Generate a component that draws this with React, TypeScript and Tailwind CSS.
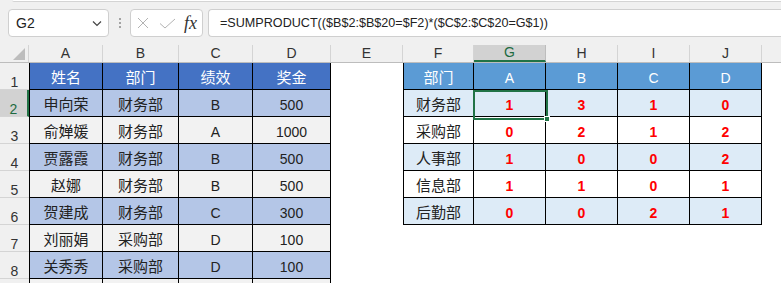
import React from "react";

const colW = ["w-[74px]", "w-[76px]", "w-[74px]", "w-[78px]", "w-[72px]", "w-[71px]", "w-[72px]", "w-[72px]", "w-[72px]", "w-[72px]"];
const letters = ["A", "B", "C", "D", "E", "F", "G", "H", "I", "J"];

const people = [
  ["姓名", "部门", "绩效", "奖金"],
  ["申向荣", "财务部", "B", "500"],
  ["俞婵媛", "财务部", "A", "1000"],
  ["贾露霞", "财务部", "B", "500"],
  ["赵娜", "财务部", "B", "500"],
  ["贺建成", "财务部", "C", "300"],
  ["刘丽娟", "采购部", "D", "100"],
  ["关秀秀", "采购部", "D", "100"],
  ["", "", "", ""],
];

const summary = [
  ["部门", "A", "B", "C", "D"],
  ["财务部", "1", "3", "1", "0"],
  ["采购部", "0", "2", "1", "2"],
  ["人事部", "1", "0", "0", "2"],
  ["信息部", "1", "1", "0", "1"],
  ["后勤部", "0", "0", "2", "1"],
];

const isHan = (s: string) => /[\u4e00-\u9fff]/.test(s);

function Cell({ w, text, cls }: { w: string; text: string; cls: string }) {
  return (
    <div className={`${w} h-full shrink-0 flex items-center justify-center pt-[4px] ${isHan(text) ? "text-[15px]" : "text-[14px]"} ${cls}`}>
      {text}
    </div>
  );
}

function FormulaBar() {
  return (
    <div className="h-[45px] bg-[#f0f0f0] relative">
      <div className="h-[2px] ml-3 bg-white border-b border-[#d4d4d4] rounded-bl-sm" />
      <div className="flex items-center mt-[7px] h-[28px]">
        {/* name box */}
        <div className="ml-[8px] w-[101px] h-full bg-white border border-[#cfcfcf] rounded-[4px] flex items-center justify-between pl-[7px] pr-[6px]">
          <span className="text-[14px] text-[#222]">G2</span>
          <svg width="10" height="7" viewBox="0 0 10 7"><path d="M1 1.5 L5 5.5 L9 1.5" fill="none" stroke="#444" strokeWidth="1.2" /></svg>
        </div>
        <svg className="ml-[9px]" width="4" height="12" viewBox="0 0 4 12">
          <circle cx="2" cy="2" r="1" fill="#8a8a8a" />
          <circle cx="2" cy="6" r="1" fill="#8a8a8a" />
          <circle cx="2" cy="10" r="1" fill="#8a8a8a" />
        </svg>
        {/* cancel / enter / fx */}
        <div className="ml-[8px] w-[73px] h-full bg-white border border-[#cfcfcf] rounded-[4px] flex items-center pl-[6px]">
          <svg width="12" height="12" viewBox="0 0 12 12"><path d="M1 1 L11 11 M11 1 L1 11" stroke="#b3b3b3" strokeWidth="1" fill="none" /></svg>
          <svg className="ml-[10px]" width="17" height="11" viewBox="0 0 17 11"><path d="M1 5.5 L6 10 L16 1" stroke="#b3b3b3" strokeWidth="1" fill="none" /></svg>
          <span className="ml-[8px] text-[18px] italic text-[#333] leading-none" style={{ fontFamily: '"Liberation Serif", serif' }}>fx</span>
        </div>
        <div className="ml-[5px] flex-1 h-full bg-white border border-r-0 border-[#cfcfcf] rounded-l-[4px] flex items-center pl-[11px]">
          <span className="text-[12.6px] text-[#222]">=SUMPRODUCT(($B$2:$B$20=$F2)*($C$2:$C$20=G$1))</span>
        </div>
      </div>
    </div>
  );
}

export default function App() {
  return (
    <div className="w-[781px] h-[283px] overflow-hidden bg-white" style={{ fontFamily: '"Liberation Sans", "Noto Sans CJK SC", sans-serif' }}>
      <FormulaBar />
      <div className="relative">
        {/* column letters */}
        <div className="flex h-[18px] bg-[#f0f0f0] border-b border-[#bdbdbd]">
          <div className="w-[29px] shrink-0 h-full border-r border-[#d4d4d4] flex items-end justify-end pr-[3px] pb-[2px]">
            <svg width="12" height="12" viewBox="0 0 12 12"><path d="M12 0 L12 12 L0 12 Z" fill="#bdbdbd" /></svg>
          </div>
          {letters.map((l, i) => (
            <div
              key={l}
              className={`${colW[i]} shrink-0 h-full flex items-center justify-center text-[14px] border-r ${
                l === "G" ? "bg-[#d2d2d2] text-[#1e6b41] border-[#bdbdbd] border-b-2 border-b-[#217346]" : "text-[#333] border-[#d4d4d4]"
              }`}
            >
              {l}
            </div>
          ))}
          <div className="flex-1" />
        </div>

        {people.map((p, ri) => {
          const r = ri + 1;
          const sel = r === 2;
          const s = summary[ri];
          return (
            <div key={r} className="flex h-[27px]">
              <div
                className={`w-[29px] shrink-0 h-full flex items-end justify-center leading-none text-[14px] border-b border-[#d4d4d4] ${
                  sel ? "bg-[#d2d2d2] text-[#1e6b41] border-r-2 border-r-[#217346]" : "bg-[#f0f0f0] text-[#333]"
                }`}
              >
                {r < 9 ? r : ""}
              </div>
              {p.map((t, ci) => (
                <Cell
                  key={ci}
                  w={colW[ci]}
                  text={t}
                  cls={`border-r border-b border-black ${ci === 0 ? "border-l" : ""} ${
                    r === 1 ? "bg-[#4472c4] text-white" : r % 2 === 0 ? "bg-[#b4c6e7] text-[#222]" : "bg-[#f2f2f2] text-[#222]"
                  }`}
                />
              ))}
              <div className={`${colW[4]} shrink-0 h-full bg-white`} />
              {s
                ? s.map((t, ci) => (
                    <Cell
                      key={ci}
                      w={colW[ci + 5]}
                      text={t}
                      cls={`border-r border-b border-black ${ci === 0 ? "border-l" : ""} ${
                        r === 1
                          ? "bg-[#5b9bd5] text-white"
                          : `${r % 2 === 0 ? "bg-[#ddebf7]" : "bg-white"} ${ci === 0 ? "text-[#222]" : "text-[#ff0000] font-bold"}`
                      }`}
                    />
                  ))
                : colW.slice(5).map((w, ci) => <div key={ci} className={`${w} shrink-0 h-full bg-white`} />)}
              <div className="flex-1 bg-white" />
            </div>
          );
        })}

        {/* active cell G2 */}
        <div className="absolute left-[473px] top-[45px] w-[75px] h-[30px] border-2 border-[#217346] pointer-events-none">
          <div className="absolute right-[-4px] bottom-[-4px] w-[6px] h-[6px] bg-[#217346] border border-white" />
        </div>
      </div>
    </div>
  );
}
